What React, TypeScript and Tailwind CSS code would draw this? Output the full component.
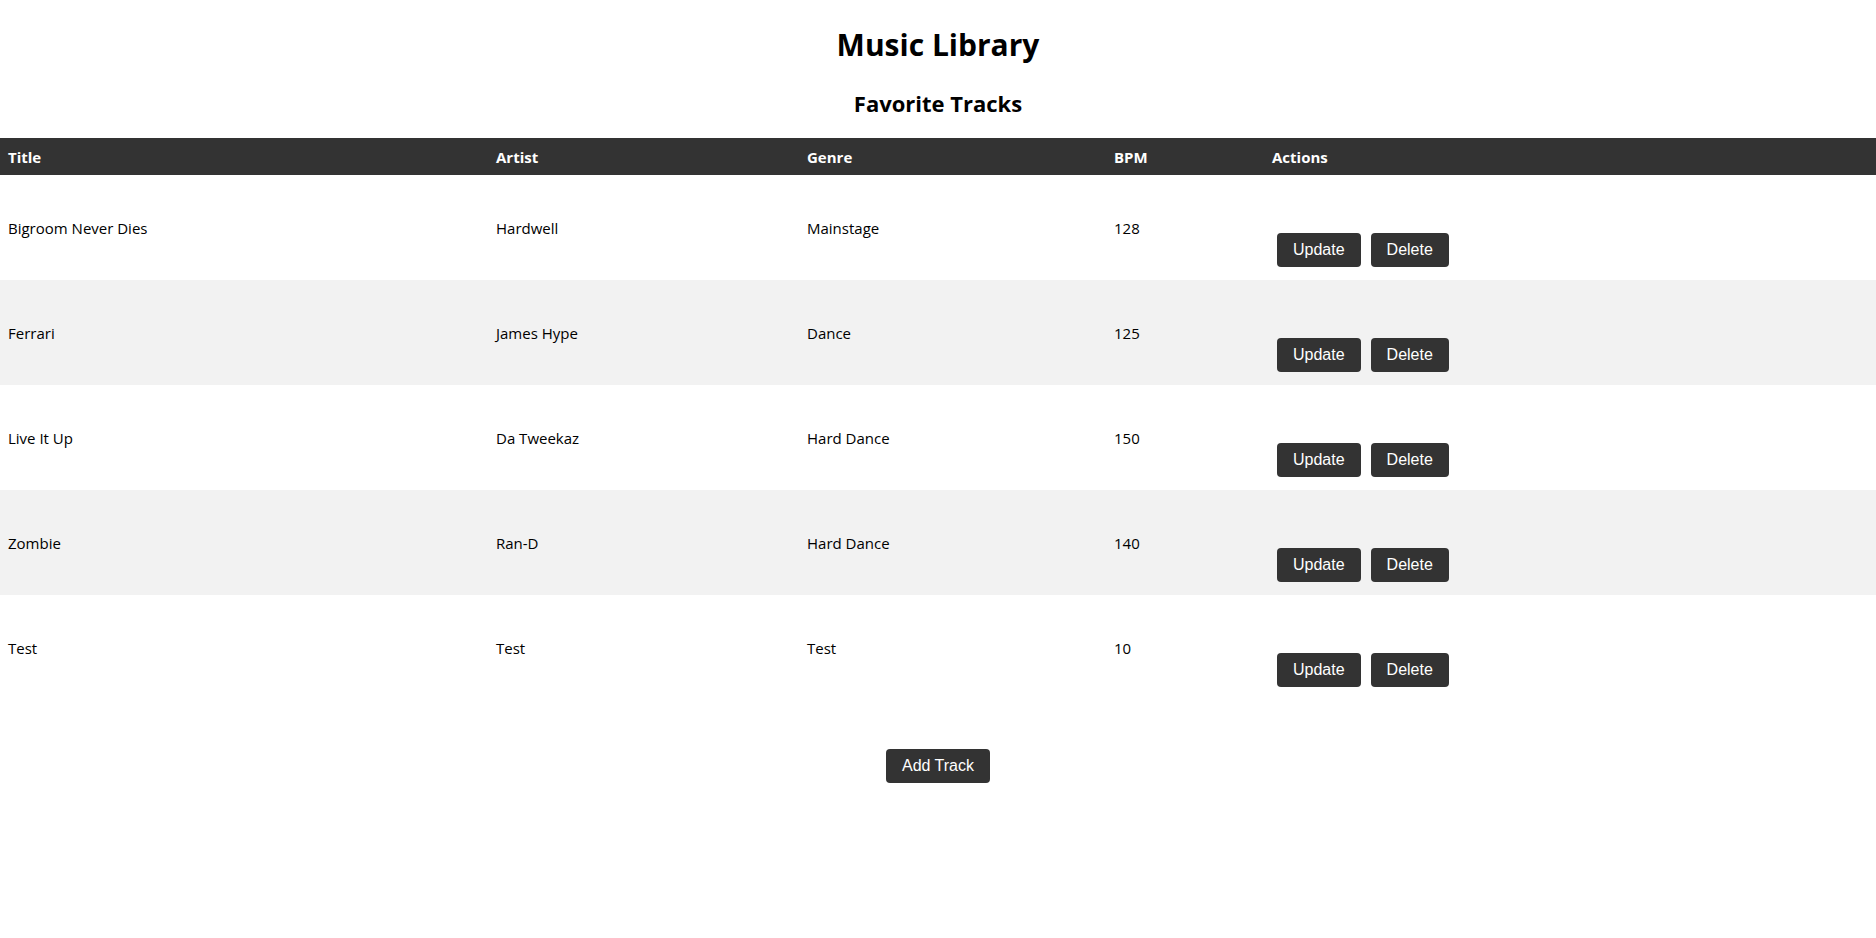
const tracks = [
  { title: "Bigroom Never Dies", artist: "Hardwell", genre: "Mainstage", bpm: 128 },
  { title: "Ferrari", artist: "James Hype", genre: "Dance", bpm: 125 },
  { title: "Live It Up", artist: "Da Tweekaz", genre: "Hard Dance", bpm: 150 },
  { title: "Zombie", artist: "Ran-D", genre: "Hard Dance", bpm: 140 },
  { title: "Test", artist: "Test", genre: "Test", bpm: 10 },
]

function ActionButton({ label }: { label: string }) {
  return (
    <button className="bg-[#333333] text-white rounded px-4 py-2 text-base leading-[18px] font-['Liberation_Sans',Arial,sans-serif]">
      {label}
    </button>
  )
}

export default function App() {
  return (
    <div className="min-h-screen bg-white text-black font-['Open_Sans',sans-serif]">
      <h1 className="pt-[25px] text-center text-[30px] leading-[40px] font-bold">Music Library</h1>
      <h2 className="pt-[22px] text-center text-[22px] leading-[32px] font-bold">Favorite Tracks</h2>

      <table className="mt-[19px] w-full table-fixed border-collapse text-[15px]">
        <colgroup>
          <col className="w-[488px]" />
          <col className="w-[311px]" />
          <col className="w-[307px]" />
          <col className="w-[158px]" />
          <col />
        </colgroup>
        <thead>
          <tr className="bg-[#333333] text-white">
            <th className="px-2 pt-[9px] pb-[7px] text-left font-bold leading-[21px]">Title</th>
            <th className="px-2 pt-[9px] pb-[7px] text-left font-bold leading-[21px]">Artist</th>
            <th className="px-2 pt-[9px] pb-[7px] text-left font-bold leading-[21px]">Genre</th>
            <th className="px-2 pt-[9px] pb-[7px] text-left font-bold leading-[21px]">BPM</th>
            <th className="px-2 pt-[9px] pb-[7px] text-left font-bold leading-[21px]">Actions</th>
          </tr>
        </thead>
        <tbody>
          {tracks.map((t, i) => (
            <tr key={t.title + i} className={`h-[105px] ${i % 2 === 1 ? "bg-[#f2f2f2]" : "bg-white"}`}>
              <td className="px-2 pt-[2px] align-middle">{t.title}</td>
              <td className="px-2 pt-[2px] align-middle">{t.artist}</td>
              <td className="px-2 pt-[2px] align-middle">{t.genre}</td>
              <td className="px-2 pt-[2px] align-middle">{t.bpm}</td>
              <td className="pl-[13px] pt-[58px] pb-2 align-top">
                <div className="flex gap-[10px]">
                  <ActionButton label="Update" />
                  <ActionButton label="Delete" />
                </div>
              </td>
            </tr>
          ))}
        </tbody>
      </table>

      <div className="mt-[49px] flex justify-center">
        <ActionButton label="Add Track" />
      </div>
    </div>
  )
}
